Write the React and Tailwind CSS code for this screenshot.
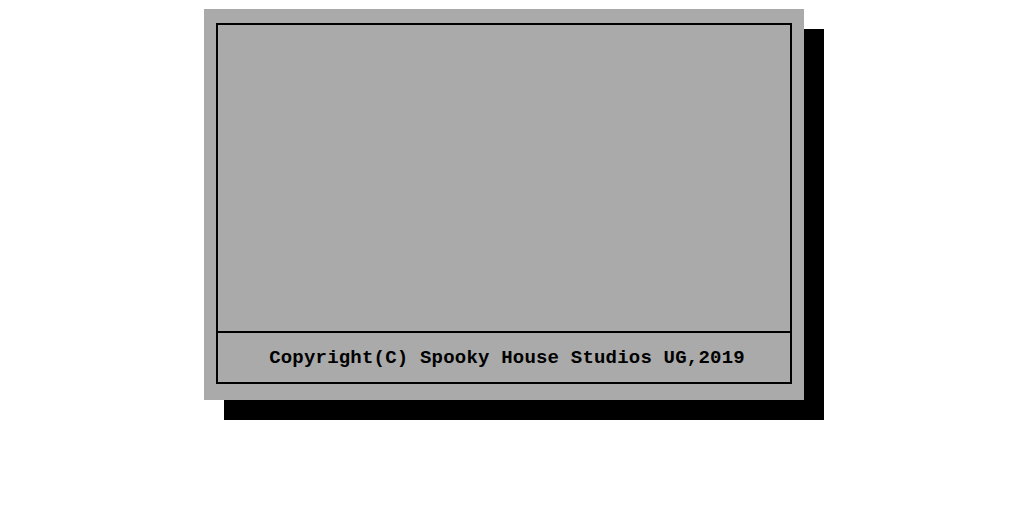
import React from 'react';

const App = () => {
  return (
    <div className="min-h-screen w-full bg-white pl-[204px] pt-[9px]">
      {/* Dialog with hard DOS-style shadow */}
      <div className="w-[600px] h-[391px] bg-[#aaaaaa] pt-[14px] pl-[12px] pr-[12px] pb-[16px] shadow-[20px_20px_0_0_#000000]">
        <div className="flex h-full flex-col border-2 border-black">
          <div className="h-[306px]" />
          <div className="flex flex-1 items-center justify-center border-t-2 border-black pl-[6px] pt-[2px]">
            <span
              className="text-[19px] font-bold leading-none tracking-[0.2px] text-black"
              style={{ fontFamily: '"Liberation Mono", "DejaVu Sans Mono", monospace' }}
            >
              Copyright(C) Spooky House Studios UG,2019
            </span>
          </div>
        </div>
      </div>
    </div>
  );
};

export default App;
